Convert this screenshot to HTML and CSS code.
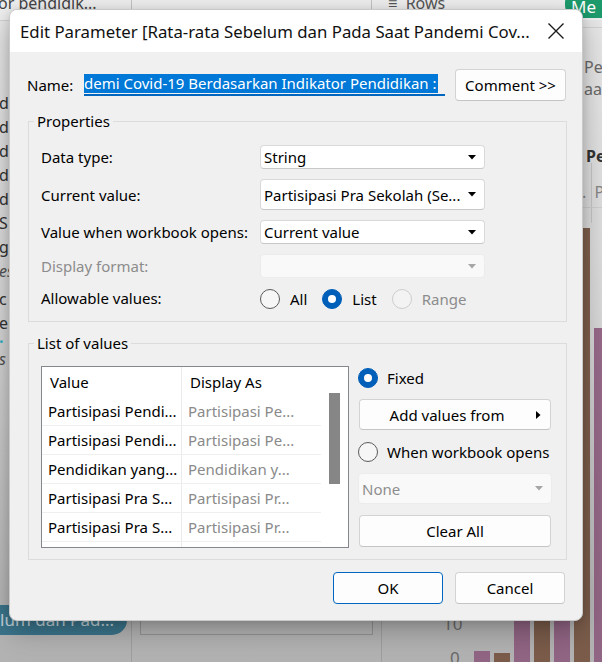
FILE: index.html
```html
<!DOCTYPE html>
<html>
<head>
<meta charset="utf-8">
<link rel="stylesheet" href="styles.css">
</head>
<body>
<div class="desk">
  <div class="topstrip"></div>
  <div class="bg-text t-or">or pendidik...</div>
  <div class="bg-text t-rows">≡&nbsp; Rows</div>
  <div class="vline v1"></div>
  <div class="vline v2"></div>
  <div class="vline v3"></div>
  <div class="vline v4"></div>
  <div class="vline v5"></div>
  <div class="hline h1"></div>
  <div class="hline h2"></div>
  <div class="hline h3"></div>
  <div class="hline h4"></div>
  <div class="pill-green">Me</div>
  <div class="side-letters">
    <span>d</span><span>d</span><span>d</span><span>di</span><span>di</span><span>S</span><span>g</span><span class="it">es</span><span class="gap">c</span><span>er</span><span class="dot">·</span><span class="it">s</span>
  </div>
  <div class="bg-text r-pe">Pe</div>
  <div class="bg-text r-aa">aa</div>
  <div class="bg-text r-pe2">Pe</div>
  <div class="bg-text r-p">.&nbsp; P</div>
  <div class="pill-teal">lum dan Pad...</div>
  <div class="chart-box"></div>
  <div class="bg-text axis10">10</div>
  <div class="bg-text axis0">0</div>
  <div class="bars">
    <div class="bar purple" style="height:11px"></div>
    <div class="bar brown" style="height:9px"></div>
    <div class="bar purple" style="height:110px"></div>
    <div class="bar brown" style="height:110px"></div>
    <div class="bar purple" style="height:110px"></div>
    <div class="bar brown" style="height:434px"></div>
    <div class="bar purple" style="height:334px"></div>
  </div>
</div>
<div class="shade"></div>

<div class="dialog">
  <div class="titlebar">
    <div class="title">Edit Parameter [Rata-rata Sebelum dan Pada Saat Pandemi Cov...</div>
    <svg class="close" width="18" height="18" viewBox="0 0 18 18"><path d="M1.5 1.5 L16.5 16.5 M16.5 1.5 L1.5 16.5" stroke="#1b1b1b" stroke-width="1.4" fill="none"/></svg>
  </div>
  <div class="body">
    <div class="name-row">
      <span class="name-label">Name:</span>
      <div class="name-input"><span class="sel">demi Covid-19 Berdasarkan Indikator Pendidikan :</span></div>
      <button class="btn comment">Comment &gt;&gt;</button>
    </div>

    <fieldset class="group props">
      <legend>Properties</legend>
      <div class="prop-grid">
        <div class="lbl">Data type:</div>
        <div class="dd"><span>String</span><svg width="8" height="5" viewBox="0 0 8 5"><path d="M0 0H8L4 4.5Z" fill="#000"/></svg></div>
        <div class="lbl">Current value:</div>
        <div class="dd tall"><span>Partisipasi Pra Sekolah (Se...</span><svg width="8" height="5" viewBox="0 0 8 5"><path d="M0 0H8L4 4.5Z" fill="#000"/></svg></div>
        <div class="lbl">Value when workbook opens:</div>
        <div class="dd"><span>Current value</span><svg width="8" height="5" viewBox="0 0 8 5"><path d="M0 0H8L4 4.5Z" fill="#000"/></svg></div>
        <div class="lbl dis">Display format:</div>
        <div class="dd disabled"><span></span><svg width="8" height="5" viewBox="0 0 8 5"><path d="M0 0H8L4 4.5Z" fill="#a6a6a6"/></svg></div>
        <div class="lbl">Allowable values:</div>
        <div class="radios">
          <span class="radio"></span><span class="rtext">All</span>
          <span class="radio on"></span><span class="rtext">List</span>
          <span class="radio off"></span><span class="rtext dis">Range</span>
        </div>
      </div>
    </fieldset>

    <fieldset class="group values">
      <legend>List of values</legend>
      <div class="values-row">
        <div class="table">
          <div class="cols">
            <div class="tr head"><div class="td">Value</div><div class="td">Display As</div></div>
            <div class="tr"><div class="td">Partisipasi Pendi...</div><div class="td g">Partisipasi Pe...</div></div>
            <div class="tr"><div class="td">Partisipasi Pendi...</div><div class="td g">Partisipasi Pe...</div></div>
            <div class="tr"><div class="td">Pendidikan yang...</div><div class="td g">Pendidikan y...</div></div>
            <div class="tr"><div class="td">Partisipasi Pra S...</div><div class="td g">Partisipasi Pr...</div></div>
            <div class="tr"><div class="td">Partisipasi Pra S...</div><div class="td g">Partisipasi Pr...</div></div>
            <div class="tr"><div class="td"></div><div class="td"></div></div>
          </div>
          <div class="track"><div class="thumb"></div></div>
        </div>
        <div class="side">
          <div class="opt"><span class="radio on"></span><span class="rtext">Fixed</span></div>
          <button class="btn wide addv"><span>Add values from</span><svg width="5" height="8" viewBox="0 0 5 8"><path d="M0 0V8L4.5 4Z" fill="#000"/></svg></button>
          <div class="opt"><span class="radio"></span><span class="rtext">When workbook opens</span></div>
          <div class="dd disabled none"><span>None</span><svg width="8" height="5" viewBox="0 0 8 5"><path d="M0 0H8L4 4.5Z" fill="#a6a6a6"/></svg></div>
          <button class="btn wide">Clear All</button>
        </div>
      </div>
    </fieldset>

    <div class="footer">
      <button class="btn ok">OK</button>
      <button class="btn">Cancel</button>
    </div>
  </div>
</div>
</body>
</html>
```
FILE: styles.css
```css
* { box-sizing: border-box; }
html, body { margin: 0; padding: 0; }
html { overflow: hidden; }
body {
  width: 602px;
  height: 662px;
  overflow: hidden;
  position: relative;
  font-family: "Noto Sans", "Open Sans", sans-serif;
  font-size: 15px;
  color: #000;
  background: linear-gradient(to bottom, #e9e9e9 0%, #dedede 45%, #c9c9c9 80%, #bdbdbd 100%);
}

/* ---------- backdrop (workspace behind the window) ---------- */
.desk { position: absolute; left: 0; top: 0; width: 602px; height: 662px; overflow: hidden; }
.topstrip { position: absolute; left: 0; top: 0; width: 602px; height: 20px; background: #efefef; }
.bg-text { position: absolute; white-space: nowrap; line-height: 20px; }
.t-or { left: -2px; top: -7px; font-size: 16px; color: #444; }
.t-rows { left: 388px; top: -7px; font-size: 16px; color: #555; }
.vline { position: absolute; width: 1px; background: #c4c4c4; }
.v1 { left: 131px; top: 0; height: 10px; }
.v2 { left: 371px; top: 0; height: 10px; }
.v3 { left: 131px; top: 620px; height: 42px; background: #a9a9a9; }
.v4 { left: 381px; top: 620px; height: 42px; background: #a9a9a9; }
.v5 { left: 591px; top: 163px; height: 60px; background: #c9c9c9; }
.hline { position: absolute; height: 1px; background: #d2d2d2; }
.h1 { left: 0; top: 20px; width: 10px; }
.h2 { left: 582px; top: 27px; width: 20px; }
.h3 { left: 582px; top: 207px; width: 20px; }
.h4 { left: 0; top: 453px; width: 10px; }
.pill-green {
  position: absolute; left: 565px; top: -10px; width: 70px; height: 28px;
  border-radius: 13px; background: #1d9b6c; color: #fff;
  font-size: 17px; line-height: 20px; padding: 7px 0 0 6px;
}
.side-letters {
  position: absolute; left: -1px; top: 91px;
  display: flex; flex-direction: column;
  font-size: 16px; line-height: 24px; color: #333;
}
.side-letters .it { font-style: italic; color: #555; }
.side-letters .gap { margin-top: 4px; }
.side-letters .dot { color: #37b7c9; font-weight: bold; line-height: 12px; height: 12px; overflow: hidden; }
.r-pe { left: 584px; top: 57px; font-size: 16px; color: #6a6a6a; }
.r-aa { left: 584px; top: 79px; font-size: 16px; color: #6a6a6a; }
.r-pe2 { left: 586px; top: 146px; font-size: 16px; font-weight: bold; color: #333; }
.r-p { left: 582px; top: 182px; font-size: 16px; color: #888; }
.pill-teal {
  position: absolute; left: -20px; top: 605px; width: 147px; height: 30px;
  border-radius: 15px; background: #3e7c94; color: #cfe0e8;
  font-size: 17px; line-height: 30px; padding-left: 20px; white-space: nowrap; overflow: hidden;
}
.chart-box { position: absolute; left: 140px; top: 600px; width: 233px; height: 35px; border: 1px solid #9d9d9d; }
.axis10 { left: 443px; top: 614px; font-size: 17px; color: #707070; }
.axis0 { left: 450px; top: 648px; font-size: 17px; color: #707070; }
.bars {
  position: absolute; left: 474px; top: 0; width: 140px; height: 662px;
  display: flex; align-items: flex-end; gap: 4px;
}
.bar { width: 16px; flex: none; }
.purple { background: #9a6b8c; }
.brown { background: #83624f; }
.shade {
  position: absolute; left: 0; top: 0; width: 602px; height: 662px;
  background: linear-gradient(to bottom, rgba(0,0,0,0) 0%, rgba(0,0,0,0.02) 50%, rgba(0,0,0,0.06) 100%);
}

/* ---------- dialog window ---------- */
.dialog {
  position: absolute;
  left: 9px; top: 9px;
  width: 574px; height: 612px;
  background: #f0f0f0;
  border-radius: 8px;
  border: 1px solid #c9c9c9;
  box-shadow: 0 10px 30px rgba(0,0,0,0.28), 0 2px 8px rgba(0,0,0,0.12);
  overflow: hidden;
  display: flex; flex-direction: column;
}
.titlebar {
  height: 42px; flex: none;
  background: #fff;
  display: flex; align-items: center; justify-content: space-between;
  padding: 0 17px 0 10px;
}
.title { font-size: 16.8px; white-space: nowrap; color: #111; padding-top: 1px; }
.close { display: block; flex: none; }

.body { padding: 17px 16px 0 17px; display: flex; flex-direction: column; }

.name-row { display: flex; align-items: center; height: 32px; }
.name-label { width: 57px; }
.name-input {
  width: 361px; height: 22px;
  border-bottom: 2px solid #0067c0;
  overflow: hidden; white-space: nowrap;
  line-height: 19px;
  margin-right: 10px;
}
.sel { background: #0078d7; color: #fff; padding: 0 1px 1px 0; display: inline-block; height: 19px; }

.btn {
  font-family: inherit; font-size: 15px; color: #000;
  background: #fdfdfd;
  border: 1px solid #d3d3d3; border-bottom-color: #c4c4c4;
  border-radius: 4px;
  height: 32px; padding: 0;
}
.comment { width: 111px; }

.group {
  margin: 0; padding: 0 12px;
  border: 1px solid #dcdcdc;
  border-radius: 0;
  min-width: 0;
}
.group legend { padding: 0 3px; margin-left: -7px; line-height: 20px; font-size: 15px; }
.props { margin: 10px 0 0 1px; padding-top: 14px; padding-bottom: 13px; width: 539px; }
.prop-grid {
  display: grid;
  grid-template-columns: 219px 225px;
  grid-template-rows: 24px 31px 24px 24px 20px;
  row-gap: 10px;
  align-items: center;
}
.prop-grid > .radios { margin-top: 1px; }
.lbl { white-space: nowrap; }
.dis { color: #8c8c8c; }

.dd {
  display: flex; align-items: center; justify-content: space-between;
  height: 100%;
  background: #fff;
  border: 1px solid #d9d9d9; border-bottom-color: #c8c8c8;
  border-radius: 4px;
  padding: 0 8px 0 3px;
  white-space: nowrap;
}
.dd.tall { height: 31px; }
.dd.disabled { background: #f9f9f9; border-color: #ececec; color: #8e8e8e; }

.radios { display: flex; align-items: center; height: 20px; }
.radio {
  width: 20px; height: 20px; border-radius: 50%;
  border: 1px solid #5a5a5a; background: #f6f6f6;
  flex: none; display: inline-block; position: relative;
}
.radio.on { background: #005fb8; border-color: #005fb8; }
.radio.on::after {
  content: ""; position: absolute; left: 5px; top: 5px;
  width: 8px; height: 8px; border-radius: 50%; background: #fff;
}
.radio.off { border-color: #cdcdcd; background: #f3f3f3; }
.rtext { margin-left: 10px; margin-right: 15px; white-space: nowrap; }

.values { margin: 11px 0 0 1px; padding-top: 13px; padding-bottom: 11px; width: 539px; }
.values-row { display: flex; align-items: flex-start; }
.table {
  width: 308px; height: 182px;
  border: 1px solid #84878e;
  background: #fff;
  display: flex; overflow: hidden;
}
.cols { width: 279px; display: flex; flex-direction: column; }
.tr { display: grid; grid-template-columns: 140px 139px; height: 29px; border-bottom: 1px solid #efefef; flex: none; }
.tr.head { height: 30px; border-bottom: none; }
.td {
  border-right: 1px solid #ebebeb;
  padding-left: 6px; line-height: 28px;
  white-space: nowrap; overflow: hidden;
}
.td:last-child { border-right: none; padding-left: 6px; }
.tr.head .td { padding-left: 8px; line-height: 31px; }
.td.g { color: #8a8a8a; }
.track { width: 27px; padding: 26px 0 0 8px; }
.thumb { width: 11px; height: 91px; background: #868686; }

.side { margin-left: 9px; width: 194px; display: flex; flex-direction: column; padding-top: 2px; }
.opt { display: flex; align-items: center; height: 20px; }
.opt .rtext { margin-left: 9px; }
.wide { width: 192px; height: 31px; margin-left: 1px; }
.addv { margin-top: 11px; display: flex; align-items: center; justify-content: center; position: relative; padding-right: 16px; }
.addv svg { position: absolute; right: 9px; top: 11px; }
.side .opt:nth-of-type(2) { margin-top: 12px; }
.none { height: 31px; margin-top: 11px; width: 194px; padding-left: 3px; }
.side .btn:last-child { margin-top: 11px; height: 32px; }

.footer { display: flex; justify-content: flex-end; gap: 12px; margin-top: 12px; padding-right: 1px; }
.footer .btn { width: 110px; }
.footer .ok { border: 1px solid #0067c0; }
```
